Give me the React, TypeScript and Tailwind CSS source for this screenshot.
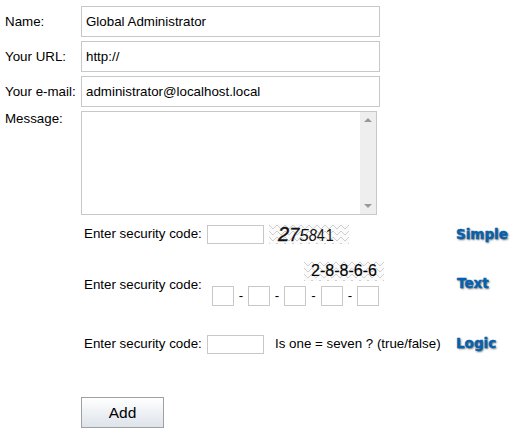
const FONT = "font-['Liberation_Sans',Arial,sans-serif]";
const FIELD = "border border-[#c8c8c8] bg-white outline-none text-[13.33px] text-black " + FONT;
const TAG = "font-['DejaVu_Sans',sans-serif] font-bold text-[13.5px] leading-none whitespace-nowrap text-[#0561ae] [-webkit-text-stroke:0.4px_#0561ae] [text-shadow:1px_1px_2px_#666]";

function Waves() {
  const lines = [3, 9, 15, 21];
  return (
    <svg className="absolute inset-0" width="80" height="20" viewBox="0 0 80 20">
      <rect width="80" height="20" fill="#fafafa" />
      {lines.map((y) => (
        <polyline
          key={y}
          fill="none"
          stroke="#cfcfcf"
          strokeWidth="1"
          points={Array.from({ length: 21 }, (_, i) => `${i * 4},${y + (i % 2 ? 2 : -2)}`).join(" ")}
        />
      ))}
    </svg>
  );
}

function TextRow({ label, value, mt }: { label: string; value: string; mt: string }) {
  return (
    <div className={"flex items-center " + mt}>
      <label className="w-[81px] pl-[5px] text-[13.33px] whitespace-nowrap">{label}</label>
      <input readOnly value={value} className={FIELD + " w-[299px] h-[31px] px-[4px]"} />
    </div>
  );
}

function SmallBox() {
  return <input readOnly className={FIELD + " w-[22px] h-[20px]"} />;
}

export default function App() {
  return (
    <div className={"w-[520px] h-[448px] bg-white text-black overflow-hidden pt-[6px] " + FONT}>
      <TextRow label="Name:" value="Global Administrator" mt="" />
      <TextRow label="Your URL:" value="http://" mt="mt-[4px]" />
      <TextRow label="Your e-mail:" value="administrator@localhost.local" mt="mt-[4px]" />

      <div className="flex mt-[4px]">
        <label className="w-[81px] pl-[5px] text-[13.33px] leading-[15px]">Message:</label>
        <div className="w-[296px] h-[104px] border border-[#c8c8c8] flex justify-end">
          <div className="w-[16px] h-full bg-[#eeeeee] flex flex-col items-center justify-between py-[6px]">
            <div className="w-0 h-0 border-x-[4px] border-x-transparent border-b-[4px] border-b-[#999999]" />
            <div className="w-0 h-0 border-x-[4px] border-x-transparent border-t-[4px] border-t-[#999999]" />
          </div>
        </div>
      </div>

      <div className="flex items-center mt-[8px] h-[22px] pl-[84px] text-[13.33px]">
        <span className="w-[123px] whitespace-nowrap">Enter security code:</span>
        <input readOnly className={FIELD + " w-[57px] h-[19px]"} />
        <div className="relative w-[80px] h-[20px] ml-[5px] overflow-hidden">
          <Waves />
          <div className="relative flex items-baseline h-full pl-[9px] text-[#111] leading-[20px]">
            <span className="text-[20px] italic [-webkit-text-stroke:0.4px_#111]">2</span>
            <span className="text-[18px] italic [-webkit-text-stroke:0.3px_#111]">7</span>
            <span className="text-[17px] italic">5</span>
            <span className="text-[17px] italic scale-x-85 -ml-[1px]">8</span>
            <span className="text-[17px] scale-x-85 -ml-[1px]">4</span>
            <span className="text-[17px] scale-x-85 -ml-[1px]">1</span>
          </div>
        </div>
        <span className={TAG + " ml-[107px] mt-[1px]"}>Simple</span>
      </div>

      <div className="flex mt-[16px] h-[46px] pl-[84px] text-[13.33px]">
        <span className="w-[128px] self-center mt-[1px] whitespace-nowrap">Enter security code:</span>
        <div className="w-[220px] flex flex-col">
          <div className="relative w-[80px] h-[20px] ml-[92px] overflow-hidden">
            <Waves />
            <div className="relative flex items-center justify-center h-full text-[16px] [-webkit-text-stroke:0.15px_#000]">2-8-8-6-6</div>
          </div>
          <div className="flex items-center mt-[5px]">
            <SmallBox />
            <span className="w-[14px] text-center">-</span>
            <SmallBox />
            <span className="w-[14px] text-center">-</span>
            <SmallBox />
            <span className="w-[15px] text-center">-</span>
            <SmallBox />
            <span className="w-[14px] text-center">-</span>
            <SmallBox />
          </div>
        </div>
        <span className={TAG + " self-center ml-[25px] mt-[-1px]"}>Text</span>
      </div>

      <div className="flex items-center mt-[26px] h-[22px] pl-[84px] text-[13.33px]">
        <span className="w-[123px] whitespace-nowrap">Enter security code:</span>
        <input readOnly className={FIELD + " w-[57px] h-[19px]"} />
        <span className="ml-[11px] w-[181px] whitespace-nowrap">Is one = seven ? (true/false)</span>
        <span className={TAG}>Logic</span>
      </div>

      <button className="block ml-[81px] mt-[42px] w-[83px] h-[31px] border border-[#a0a0a0] bg-gradient-to-b from-white to-[#dde3ea] text-[15.5px] text-black">
        Add
      </button>
    </div>
  );
}
